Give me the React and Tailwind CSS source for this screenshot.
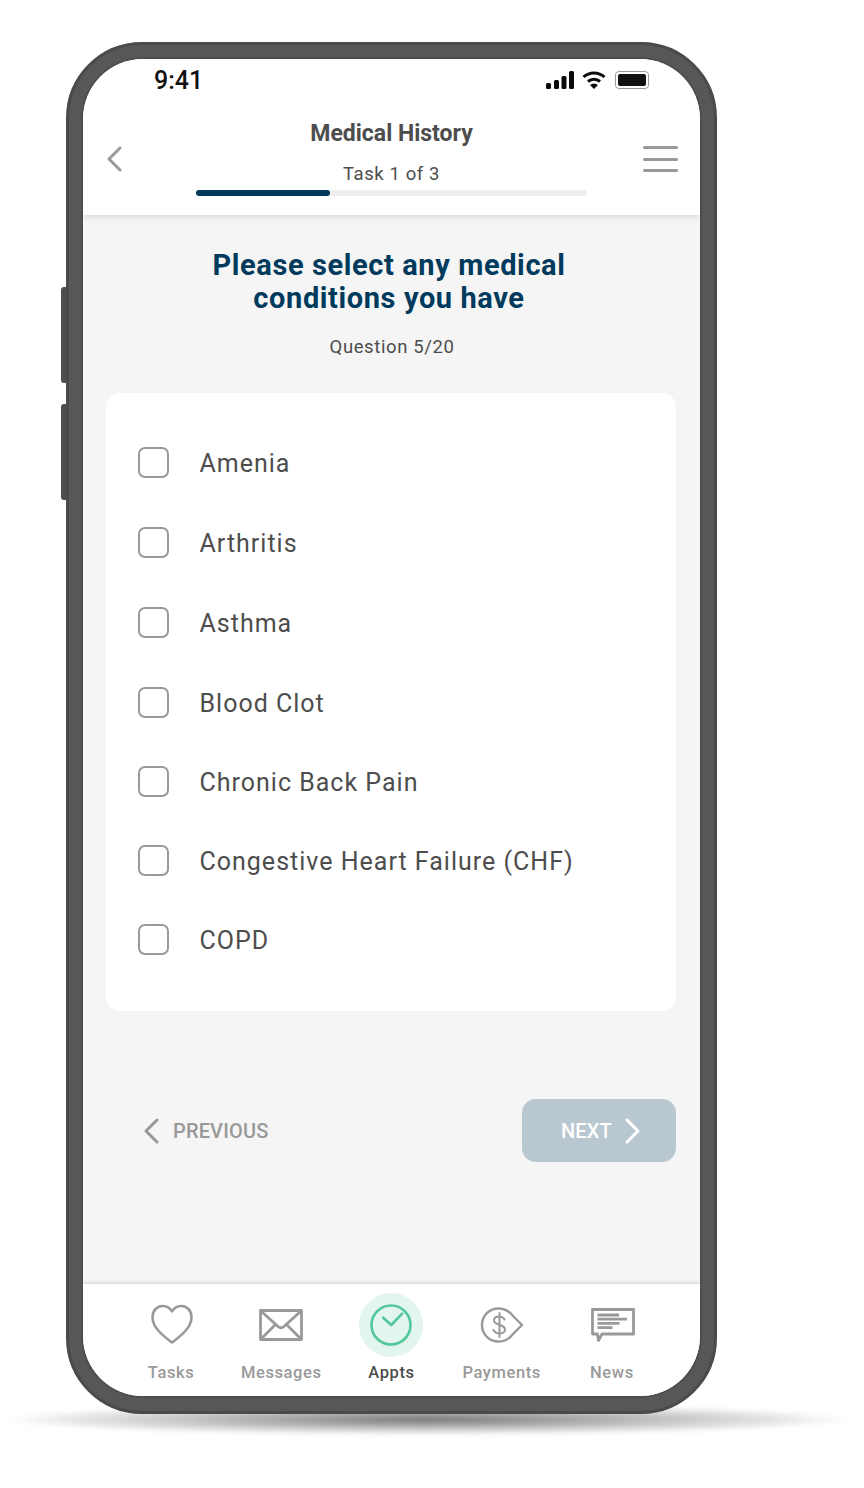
const CONDITIONS = [
  { label: "Amenia", className: "h-[79px]" },
  { label: "Arthritis", className: "h-[80px]" },
  { label: "Asthma", className: "h-[81px]" },
  { label: "Blood Clot", className: "h-[79px]" },
  { label: "Chronic Back Pain", className: "h-[79px]" },
  { label: "Congestive Heart Failure (CHF)", className: "h-[79px]" },
  { label: "COPD", className: "h-[79px]" },
];

const Chevron = ({ left, color, width = 3 }) => (
  <svg width="15" height="26" viewBox="0 0 15 26" fill="none" stroke={color} strokeWidth={width} strokeLinecap="round" strokeLinejoin="round" className="shrink-0">
    <path d={left ? "M13 2L2 13L13 24" : "M2 2L13 13L2 24"} />
  </svg>
);

const HeartIcon = () => (
  <svg width="44" height="41" viewBox="0 0 44 42" fill="none" stroke="#999" strokeWidth="2.6" strokeLinejoin="round" className="ml-[1px] -mt-[2px]">
    <path d="M22 39.5C15 34 2 25 2 13.5C2 6.5 7 2 12.5 2C16.5 2 20 4 22 7.5C24 4 27.5 2 31.5 2C37 2 42 6.5 42 13.5C42 25 29 34 22 39.5Z" />
  </svg>
);

const MailIcon = () => (
  <svg width="44" height="32" viewBox="0 0 44 32" fill="none" stroke="#999" strokeWidth="2.8" strokeLinejoin="round">
    <rect x="1.5" y="1.5" width="41" height="29" />
    <path d="M2 2L19 17.5C20.8 19 23.2 19 25 17.5L42 2" />
    <path d="M2 30L16.5 15.5M42 30L27.5 15.5" />
  </svg>
);

const ClockIcon = () => (
  <svg width="42" height="42" viewBox="0 0 42 42" fill="none" stroke="#52c79a" strokeWidth="2.6" strokeLinecap="round" strokeLinejoin="round">
    <circle cx="21" cy="21" r="19.5" />
    <path d="M13.2 13.7L21.2 21L32.2 9.7" />
  </svg>
);

const PaymentIcon = () => (
  <svg width="44" height="36" viewBox="0 0 44 36" fill="none" stroke="#999" strokeWidth="2.4" strokeLinecap="round" strokeLinejoin="round">
    <path d="M2 18C2 8.5 9.5 1.5 18.5 1.5C25.5 1.5 30 5 33 9L42 18L33 27C30 31 25.5 34.5 18.5 34.5C9.5 34.5 2 27.5 2 18Z" />
    <path d="M24.5 12.5C23.5 10.5 21.5 9.5 19 9.5C16 9.5 14 11 14 13.5C14 19 25 16.5 25 22.5C25 25 22.5 26.5 19.5 26.5C16.5 26.5 14.5 25 13.5 23M19.5 6V30" strokeWidth="2" />
  </svg>
);

const NewsIcon = () => (
  <svg width="44" height="34" viewBox="0 0 44 34" fill="none" stroke="#999" strokeLinejoin="round" className="ml-[2px]">
    <path d="M1.5 1.5H42.5V26H11L7.5 32.5L6.5 26H1.5Z" strokeWidth="2.8" />
    <path d="M6.5 7H28M6.5 11.2H36M6.5 15.4H28.5M6.5 19.6H21.5" strokeWidth="2.8" />
  </svg>
);

const NAV_ITEMS = [
  { label: "Tasks", Icon: HeartIcon },
  { label: "Messages", Icon: MailIcon },
  { label: "Appts", Icon: ClockIcon, active: true },
  { label: "Payments", Icon: PaymentIcon },
  { label: "News", Icon: NewsIcon },
];

const StatusIcons = () => (
  <div className="flex items-center gap-[8px]">
    <svg width="28" height="18" viewBox="0 0 28 18" fill="#0a0a0a">
      <rect x="0" y="12" width="5" height="6" rx="1.5" />
      <rect x="8" y="9" width="5" height="9" rx="1.5" />
      <rect x="15.5" y="5" width="5" height="13" rx="1.5" />
      <rect x="23" y="0" width="5" height="18" rx="1.5" />
    </svg>
    <svg width="24" height="18" viewBox="0 0 24 18" fill="none" stroke="#0a0a0a" strokeWidth="3">
      <path d="M1.5 6C7.5 0.5 16.5 0.5 22.5 6" />
      <path d="M6 10.5C9.5 7.5 14.5 7.5 18 10.5" />
      <path d="M12 18L8 14C10.5 12 13.5 12 16 14Z" fill="#0a0a0a" stroke="none" />
    </svg>
    <div className="ml-[1px] flex h-[18px] w-[34px] items-center justify-center rounded-[4px] border border-[#9a9a9a] bg-white">
      <div className="h-[12px] w-[28px] rounded-[2px] bg-[#111]" />
    </div>
  </div>
);

export default function App() {
  return (
    <div className="relative h-[1488px] w-[864px] overflow-hidden bg-white pl-[66px] pt-[42px] font-['Roboto',sans-serif]">
      {/* ground shadow */}
      <div className="absolute left-[4px] top-[1404px] h-[31px] w-[846px] rounded-[50%] bg-[radial-gradient(closest-side,#777777_0%,#a0a0a0_30%,#c8c8c8_60%,#e8e8e8_85%,#ffffff_100%)] blur-[2px]" />

      {/* side buttons */}
      <div className="absolute left-[61px] top-[287px] h-[96px] w-[8px] rounded-l-[3px] bg-[#4e4e4e]" />
      <div className="absolute left-[61px] top-[404px] h-[96px] w-[8px] rounded-l-[3px] bg-[#4e4e4e]" />

      {/* phone */}
      <div className="relative h-[1372px] w-[651px] rounded-[76px] border-[3px] border-[#4a4a4a] bg-[#575757] p-[14px]">
        <div className="flex h-[1337px] w-[617px] flex-col overflow-hidden rounded-[60px] bg-[#f5f5f5] shadow-[0_0_0_2px_#4d4d4d]">
          {/* header */}
          <header className="relative z-10 h-[156px] shrink-0 bg-white shadow-[0_2px_6px_rgba(0,0,0,0.12)]">
            <div className="flex h-[37px] items-end justify-between pl-[71px] pr-[51px]">
              <span className="text-[25px] font-medium leading-[30px] text-[#111]">9:41</span>
              <div className="pb-[7px]">
                <StatusIcons />
              </div>
            </div>
            <div className="flex items-start pl-[24px] pr-[22px]">
              <div className="mt-[50px]">
                <Chevron left color="#999" />
              </div>
              <div className="ml-[74px] flex w-[391px] flex-col items-center pt-[23px]">
                <h1 className="text-[23px] font-bold leading-[30px] text-[#4d4d4d]">Medical History</h1>
                <p className="mt-[14px] text-[18.5px] leading-[22px] tracking-[0.6px] text-[#4d4d4d]">Task 1 of 3</p>
                <div className="mt-[5px] h-[6px] w-full rounded-full bg-[#eeeeee]">
                  <div className="h-[6px] w-[134px] rounded-full bg-[#003a5d]" />
                </div>
              </div>
              <div className="ml-auto mt-[50px] flex w-[35px] flex-col gap-[8.5px]">
                <div className="h-[3px] rounded-full bg-[#999]" />
                <div className="h-[3px] rounded-full bg-[#999]" />
                <div className="h-[3px] rounded-full bg-[#999]" />
              </div>
            </div>
          </header>

          {/* question */}
          <main className="flex flex-1 flex-col pl-[23px] pr-[24px]">
            <h2 className="mt-[34px] pr-[4px] text-center text-[29px] font-bold leading-[33px] tracking-[0.6px] text-[#003a5d]">
              Please select any medical
              <br />
              conditions you have
            </h2>
            <p className="mt-[20px] pl-[2px] text-center text-[18.5px] leading-[24px] tracking-[0.6px] text-[#4d4d4d]">Question 5/20</p>

            <div className="mt-[34px] flex h-[618px] flex-col rounded-[14px] bg-white pl-[32px] pt-[30px]">
              {CONDITIONS.map((item) => (
                <label key={item.label} className={`flex shrink-0 items-center gap-[30.5px] ${item.className}`}>
                  <span className="h-[31px] w-[31px] rounded-[7px] border-2 border-[#999] bg-white" />
                  <span className="pt-[3px] text-[25px] leading-[32px] tracking-[1px] text-[#4d4d4d]">{item.label}</span>
                </label>
              ))}
            </div>

            <div className="mt-[88px] flex items-center justify-between">
              <button className="flex items-center gap-[14px] pl-[38px] text-[20px] font-medium tracking-[0.15px] text-[#999]">
                <Chevron left color="#999" />
                PREVIOUS
              </button>
              <button className="flex h-[63px] w-[154px] items-center gap-[13px] rounded-[14px] bg-[#b8c7d0] pl-[39px] text-[20px] font-medium tracking-[0.15px] text-white">
                NEXT
                <Chevron color="#fff" />
              </button>
            </div>
          </main>

          {/* bottom nav */}
          <nav className="relative z-10 grid h-[112px] shrink-0 grid-cols-5 bg-white px-[33px] shadow-[0_-1px_4px_rgba(0,0,0,0.16)]">
            {NAV_ITEMS.map(({ label, Icon, active }) => (
              <div key={label} className="flex flex-col items-center">
                <div className={`mt-[9px] flex h-[64px] w-[64px] items-center justify-center rounded-full ${active ? "bg-[#e2f5ee]" : ""}`}>
                  <Icon />
                </div>
                <span className={`mt-[6px] text-[16.5px] font-medium leading-[20px] tracking-[0.6px] ${active ? "text-[#4d4d4d]" : "text-[#999]"}`}>
                  {label}
                </span>
              </div>
            ))}
          </nav>
        </div>
      </div>
    </div>
  );
}
